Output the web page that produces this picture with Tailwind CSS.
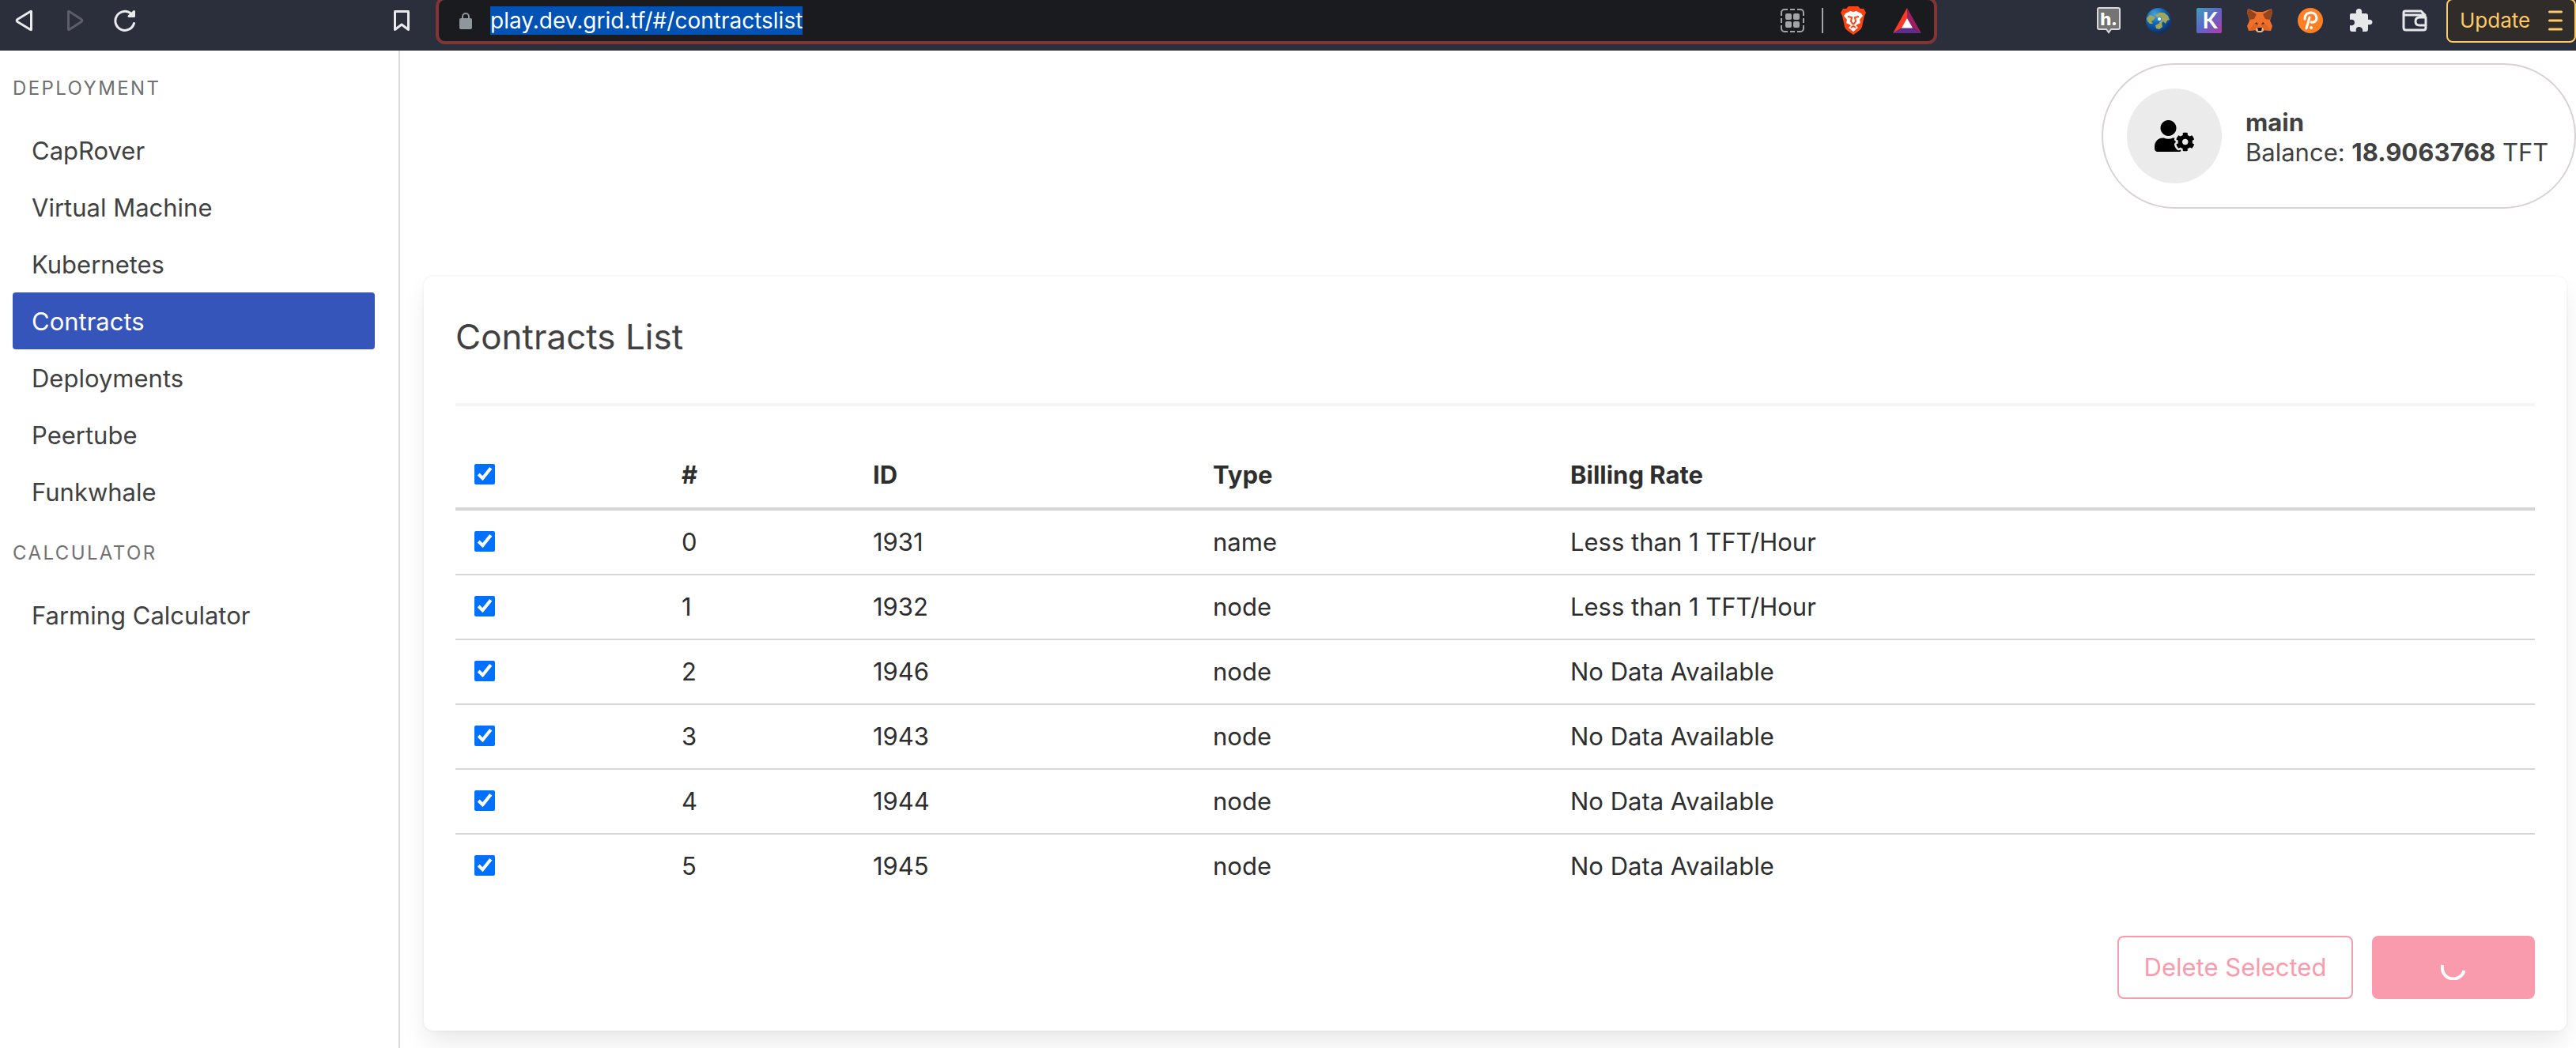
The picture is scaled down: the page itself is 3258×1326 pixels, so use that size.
<!DOCTYPE html>
<html lang="en">
<head>
<meta charset="utf-8">
<title>Contracts List</title>
<script src="https://cdn.jsdelivr.net/npm/@tailwindcss/browser@4"></script>
</head>
<body class="flex min-h-screen flex-col bg-white font-['Inter',sans-serif] text-[31px] leading-[48px] text-[#414141]">

<header class="flex h-16 shrink-0 items-start overflow-hidden bg-[#2b2e3b]">
  <div class="flex h-[52px] w-[551px] shrink-0 items-center pr-8 pl-[18px]">
    <button type="button" aria-label="Back" class="h-7 w-6"><svg viewBox="0 0 24 28" class="size-full" fill="none" stroke="#e9eaec" stroke-width="3" stroke-linejoin="round"><path d="M21.500 2.500V25.500Q21.500 26 20.500 25.500L4 15.500Q2.500 14 4 12.500L20.500 2.500Q21.500 2 21.500 2.500Z"/></svg></button>
    <button type="button" aria-label="Forward" class="ml-[42px] h-7 w-6"><svg viewBox="0 0 24 28" class="size-full" fill="none" stroke="#5b5e69" stroke-width="3" stroke-linejoin="round"><path d="M2.500 2.500V25.500Q2.500 26 3.500 25.500L19 15.500Q20.500 14 19 12.500L3.500 2.500Q2.500 2 2.500 2.500Z"/></svg></button>
    <button type="button" aria-label="Reload" class="ml-9 size-7"><svg viewBox="0 0 28 28" class="size-full" fill="none" stroke="#e9eaec" stroke-width="3" stroke-linecap="round"><path d="M25.500 17.500A12 12 0 1 1 22 5.500"/><path d="M19 8.500H25.500V2.500Z" fill="#e9eaec" stroke-linejoin="round"/></svg></button>
    <button type="button" aria-label="Bookmark" class="ml-auto h-7 w-[22px]"><svg viewBox="0 0 22 28" class="size-full" fill="none" stroke="#e9eaec" stroke-width="3" stroke-linejoin="round"><path d="M2.500 2.500H19.500V25.500L11 19L2.500 25.500Z"/></svg></button>
  </div>

  <div class="-mt-1 flex h-[60px] flex-1 items-center rounded-xl border-4 border-[#833434] bg-[#1a1b1f] pr-4 pl-[25px]">
    <svg viewBox="0 0 18 22" class="h-[22px] w-[18px] shrink-0"><rect x="1" y="8" width="16" height="14" rx="2" fill="#8f969c"/><path d="M5 9V6a4 4 0 0 1 8 0V9" fill="none" stroke="#8f969c" stroke-width="2"/></svg>
    <a href="#/contractslist" class="ml-[22px] bg-[#0052b4] text-[28px] leading-9 text-white">play.dev.grid.tf/#/contractslist</a>
    <svg viewBox="0 0 30 30" class="ml-auto size-[30px]" fill="none" stroke="#a3a4a8" stroke-width="2"><path d="M1 9V5a4 4 0 0 1 4-4H9M12 1H18M21 1h4a4 4 0 0 1 4 4V9M29 12v6M29 21v4a4 4 0 0 1-4 4H21M18 29H12M9 29H5a4 4 0 0 1-4-4V21M1 18V12"/><g fill="#a3a4a8" stroke="none"><rect x="6" y="6" width="8" height="8" rx="2"/><rect x="16" y="6" width="8" height="8" rx="2"/><rect x="6" y="16" width="8" height="8" rx="2"/><rect x="16" y="16" width="8" height="8" rx="2"/></g></svg>
    <span class="ml-[22px] h-8 w-0.5 bg-[#a3a4a8]"></span>
    <svg viewBox="0 0 32 36" class="ml-[22px] h-9 w-8"><path d="M10 0H22L25 3L29 3L32 8L30 12L27 26Q26 29 23 31L16 36L9 31Q6 29 5 26L2 12L0 8L3 3L7 3Z" fill="#fb4314"/><path d="M16 7L20 6L26 9L28 12L24 17L25 21L19 24L22 27L16 32L10 27L13 24L7 21L8 17L4 12L6 9L12 6Z" fill="#fff"/><path d="M9 13L14 14L13 19L15 22H17L19 19L18 14L23 13M13 27L16 25L19 27" fill="none" stroke="#fb4314" stroke-width="2"/></svg>
    <svg viewBox="0 0 36 32" class="ml-[34px] h-8 w-9"><path d="M18 0L0 32L12 25L18 13Z" fill="#fd3a26"/><path d="M18 0L36 32L24 25L18 13Z" fill="#9d1f63"/><path d="M0 32H36L24 25H12Z" fill="#5f2d89"/><path d="M18 13L11 25.500H25Z" fill="#fff"/></svg>
  </div>

  <div class="flex h-[52px] shrink-0 items-center gap-8 pl-[202px]">
    <svg viewBox="0 0 30 34" class="h-[34px] w-[30px]"><path d="M3 1H27Q29 1 29 3V26Q29 28 27 28H18L15 32L12 28H3Q1 28 1 26V3Q1 1 3 1Z" fill="#747474" stroke="#dadada" stroke-width="2"/><text x="15" y="23" text-anchor="middle" class="fill-white font-['Inter',sans-serif] text-[22px] font-extrabold">h.</text></svg>
    <svg viewBox="0 0 32 32" class="size-8"><defs><radialGradient id="sea" cx=".35" cy=".25" r=".8"><stop offset="0" stop-color="#4aa3e0"/><stop offset=".5" stop-color="#0d5fae"/><stop offset="1" stop-color="#0a2c66"/></radialGradient></defs><circle cx="16" cy="16" r="16" fill="url(#sea)"/><path d="M1 13L5 9L9 10L12 12L10 15L7 17L9 20L5 20L2 17ZM12 9L17 6L23 6L28 10L30 15L27 16L25 20L22 17L20 19L21 24L17 27L13 26L12 22L16 20L19 16L15 14Z" fill="#a1a75a"/><circle cx="17" cy="14" r="3" fill="#2f8ad8"/><circle cx="17" cy="14" r="2" fill="#fff"/></svg>
    <svg viewBox="0 0 32 32" class="size-8"><defs><linearGradient id="kg" x1="0" y1="0" x2="1" y2="1"><stop offset="0" stop-color="#3fa0bd"/><stop offset=".5" stop-color="#5d65c4"/><stop offset="1" stop-color="#b23ba4"/></linearGradient></defs><rect width="32" height="32" rx="2" fill="url(#kg)"/><text x="17" y="26" text-anchor="middle" class="fill-white font-['Lato',sans-serif] text-[28px] font-bold">K</text></svg>
    <svg viewBox="0 0 32 30" class="h-[30px] w-8"><path d="M1 0L12 4H20L31 0L32 5L29 15L32 22L30 28L22 27L19 30H13L10 27L2 28L0 22L3 15L0 5Z" fill="#f0702a"/><path d="M1 0L12 7L9 13L3 14L0 5ZM31 0L20 7L23 13L29 14L32 5Z" fill="#94451d"/><path d="M10 18L14 20L13 27L2 28L7 21ZM22 18L18 20L19 27L30 28L25 21Z" fill="#e06420"/><path d="M12 17L14 20L10 19ZM20 17L18 20L22 19Z" fill="#2b2e3b"/><path d="M12 24H20L21 27L18 30H14L11 27Z" fill="#d0bfb2"/><path d="M13 24H19L18 28H14Z" fill="#17171a"/></svg>
    <svg viewBox="0 0 32 32" class="size-8"><circle cx="16" cy="16" r="16" fill="#ff7f24"/><path d="M9 14C9 7 14 6 17 6C21 6 24 9 24 13C24 17 20 19 17 18M15 12L11 26" fill="none" stroke="#fff" stroke-width="3" stroke-linecap="round"/><circle cx="17" cy="25" r="2" fill="#fff"/></svg>
    <svg viewBox="-1 0 32 30" class="mr-1 h-[30px] w-8" fill="#e6e7e9"><path d="M3 6H9C8 2 10 0 12.500 0S17 2 16 6H21Q24 6 24 9V14C27 13 29.500 14.500 29.500 17S27 21 24 20V26Q24 29 21 29H17C18 25 15 23 12.500 23S8 25 9 29H4Q1 29 1 26V21C5 22 7 20 7 17.500S5 13 1 14V8Q1 6 3 6Z"/></svg>
    <svg viewBox="0 0 32 28" class="h-7 w-8" fill="none" stroke="#e6e7e9" stroke-width="3" stroke-linejoin="round"><path d="M29 10V7L24 2H4Q2 2 2 4V23Q2 26 5 26H27Q30 26 30 23V10H22Q17 10 17 15T22 20H30M2 5Q2 7 5 7H28"/></svg>
    <button type="button" class="-ml-2 flex h-14 w-[164px] shrink-0 items-center justify-between rounded-lg border-2 border-[#ffc964] bg-[#2f2c2a] pr-[15px] pl-[15px] text-[26px] leading-9 text-[#ffc964]">Update
      <svg viewBox="0 0 18 26" class="h-[26px] w-[18px]" stroke="#ffc964" stroke-width="3" stroke-linecap="round"><path d="M1.500 2H16.500M1.500 13H16.500M1.500 24H16.500"/></svg>
    </button>
  </div>
</header>

<div class="flex flex-1">
  <aside class="w-[506px] shrink-0 border-r-2 border-[#d8d8d8] py-[30px] pr-[30px] pl-4">
    <nav>
      <p class="mb-6 text-[24px] leading-9 tracking-widest text-[#707070] uppercase">Deployment</p>
      <ul>
        <li><a href="#/caprover" class="block rounded px-6 pt-[13px] pb-[11px]">CapRover</a></li>
        <li><a href="#/vm" class="block rounded px-6 pt-[13px] pb-[11px]">Virtual Machine</a></li>
        <li><a href="#/kubernetes" class="block rounded px-6 pt-[13px] pb-[11px]">Kubernetes</a></li>
        <li><a href="#/contractslist" aria-current="page" class="block rounded bg-[#3555ba] px-6 pt-[13px] pb-[11px] text-white">Contracts</a></li>
        <li><a href="#/deployments" class="block rounded px-6 pt-[13px] pb-[11px]">Deployments</a></li>
        <li><a href="#/peertube" class="block rounded px-6 pt-[13px] pb-[11px]">Peertube</a></li>
        <li><a href="#/funkwhale" class="block rounded px-6 pt-[13px] pb-[11px]">Funkwhale</a></li>
      </ul>
      <p class="my-6 text-[24px] leading-9 tracking-widest text-[#707070] uppercase">Calculator</p>
      <ul>
        <li><a href="#/calculator" class="block rounded px-6 pt-[13px] pb-[11px]">Farming Calculator</a></li>
      </ul>
    </nav>
  </aside>

  <main class="min-w-0 flex-1 overflow-hidden pt-4">
    <div class="ml-auto flex w-[600px] items-center gap-[30px] rounded-full border-2 border-[#d8d1d3] p-[30px] pr-0">
      <button type="button" aria-label="Profile settings" class="flex size-[120px] shrink-0 items-center justify-center rounded-full bg-[#ebebeb]">
        <svg viewBox="0 0 640 512" class="h-10 w-[50px]"><path d="M610.500 373.300c2.600-14.100 2.600-28.500 0-42.600l25.800-14.900c3-1.700 4.300-5.200 3.300-8.500-6.700-21.600-18.200-41.200-33.200-57.400-2.300-2.500-6-3.100-9-1.400l-25.800 14.900c-10.900-9.300-23.400-16.500-36.900-21.300v-29.800c0-3.400-2.400-6.400-5.700-7.100-22.300-5-45-4.800-66.200 0-3.300.7-5.700 3.700-5.700 7.100v29.800c-13.500 4.800-26 12-36.900 21.300l-25.800-14.900c-2.900-1.700-6.700-1.100-9 1.400-15 16.200-26.500 35.800-33.200 57.400-1 3.300.4 6.800 3.300 8.500l25.800 14.900c-2.600 14.100-2.600 28.500 0 42.600l-25.800 14.900c-3 1.700-4.300 5.200-3.300 8.500 6.700 21.600 18.200 41.100 33.200 57.400 2.300 2.500 6 3.100 9 1.400l25.800-14.900c10.900 9.300 23.400 16.500 36.900 21.300v29.800c0 3.400 2.400 6.400 5.700 7.100 22.300 5 45 4.800 66.200 0 3.300-.7 5.700-3.700 5.700-7.100v-29.800c13.500-4.800 26-12 36.900-21.300l25.800 14.900c2.900 1.700 6.700 1.100 9-1.400 15-16.200 26.500-35.800 33.200-57.400 1-3.300-.4-6.800-3.300-8.500l-25.800-14.900zM496 400.500c-26.800 0-48.500-21.800-48.500-48.500s21.800-48.500 48.500-48.500 48.500 21.800 48.500 48.500-21.700 48.500-48.500 48.500zM224 256c70.700 0 128-57.300 128-128S294.700 0 224 0 96 57.300 96 128s57.300 128 128 128zm201.200 226.500c-2.300-1.200-4.600-2.600-6.800-3.900l-7.900 4.600c-6 3.400-12.800 5.300-19.600 5.300-10.900 0-21.400-4.600-28.900-12.600-18.300-19.800-32.300-43.900-40.200-69.600-5.500-17.700 1.900-36.400 17.900-45.700l7.900-4.600c-.1-2.600-.1-5.200 0-7.800l-7.900-4.600c-16-9.200-23.400-28-17.900-45.700.9-2.900 2.200-5.800 3.200-8.700-3.800-.3-7.500-1.200-11.400-1.200h-16.700c-22.200 10.200-46.900 16-72.900 16s-50.600-5.800-72.900-16h-16.700C60.200 288 0 348.200 0 422.400V464c0 26.500 21.500 48 48 48h352c10.100 0 19.500-3.200 27.200-8.500-1.200-3.800-2-7.700-2-11.800v-9.200z"/></svg>
      </button>
      <div class="pt-1 leading-[38px] whitespace-nowrap">
        <p class="font-bold">main</p>
        <p>Balance: <span class="font-bold">18.9063768</span> TFT</p>
      </div>
    </div>

    <section class="mt-[86px] mr-3 ml-[30px] rounded-xl bg-white p-10 shadow-[0_16px_32px_-4px_rgba(10,10,10,0.1),0_0_0_2px_rgba(10,10,10,0.02)]">
      <h1 class="text-[44px] leading-[72px]">Contracts List</h1>
      <hr class="mt-12 mb-[46px] border-t-4 border-[#f4f4f4]">
      <table class="w-full table-fixed border-separate border-spacing-0 text-left text-[#2e2e2e] [&_td]:border-b-2 [&_td]:border-[#d6d6d6] [&_th]:border-b-4 [&_th]:border-[#d6d6d6] [&_tr:last-child_td]:border-b-0">
        <colgroup><col class="w-[262px]"><col class="w-[242px]"><col class="w-[430px]"><col class="w-[452px]"><col></colgroup>
        <thead>
          <tr class="h-[86px]">
            <th class="px-6"><input type="checkbox" checked aria-label="Select all" class="mb-0.5 block size-[26px] accent-[#0070ff]"></th>
            <th class="px-6 font-bold">#</th><th class="px-6 font-bold">ID</th><th class="px-6 font-bold">Type</th><th class="px-6 font-bold">Billing Rate</th>
          </tr>
        </thead>
        <tbody>
          <tr class="h-[82px]"><td class="px-6"><input type="checkbox" checked aria-label="Select contract 1931" class="mb-0.5 block size-[26px] accent-[#0070ff]"></td><td class="px-6">0</td><td class="px-6">1931</td><td class="px-6">name</td><td class="px-6">Less than 1 TFT/Hour</td></tr>
          <tr class="h-[82px]"><td class="px-6"><input type="checkbox" checked aria-label="Select contract 1932" class="mb-0.5 block size-[26px] accent-[#0070ff]"></td><td class="px-6">1</td><td class="px-6">1932</td><td class="px-6">node</td><td class="px-6">Less than 1 TFT/Hour</td></tr>
          <tr class="h-[82px]"><td class="px-6"><input type="checkbox" checked aria-label="Select contract 1946" class="mb-0.5 block size-[26px] accent-[#0070ff]"></td><td class="px-6">2</td><td class="px-6">1946</td><td class="px-6">node</td><td class="px-6">No Data Available</td></tr>
          <tr class="h-[82px]"><td class="px-6"><input type="checkbox" checked aria-label="Select contract 1943" class="mb-0.5 block size-[26px] accent-[#0070ff]"></td><td class="px-6">3</td><td class="px-6">1943</td><td class="px-6">node</td><td class="px-6">No Data Available</td></tr>
          <tr class="h-[82px]"><td class="px-6"><input type="checkbox" checked aria-label="Select contract 1944" class="mb-0.5 block size-[26px] accent-[#0070ff]"></td><td class="px-6">4</td><td class="px-6">1944</td><td class="px-6">node</td><td class="px-6">No Data Available</td></tr>
          <tr class="h-20"><td class="px-6"><input type="checkbox" checked aria-label="Select contract 1945" class="mb-0.5 block size-[26px] accent-[#0070ff]"></td><td class="px-6">5</td><td class="px-6">1945</td><td class="px-6">node</td><td class="px-6">No Data Available</td></tr>
        </tbody>
      </table>
      <div class="mt-12 flex justify-end gap-6">
        <button type="button" class="h-20 w-[298px] rounded-lg border-2 border-[#f99bad] text-[#f99bad]">Delete Selected</button>
        <button type="button" aria-label="Deleting all" class="flex h-20 w-[206px] items-center justify-center rounded-lg bg-[#f99bad]">
          <svg viewBox="0 0 32 32" class="size-8" fill="none" stroke="#fff" stroke-width="4"><path d="M2.300 13A14 14 0 1 0 29.500 20"/></svg>
        </button>
      </div>
    </section>
  </main>
</div>
</body>
</html>
